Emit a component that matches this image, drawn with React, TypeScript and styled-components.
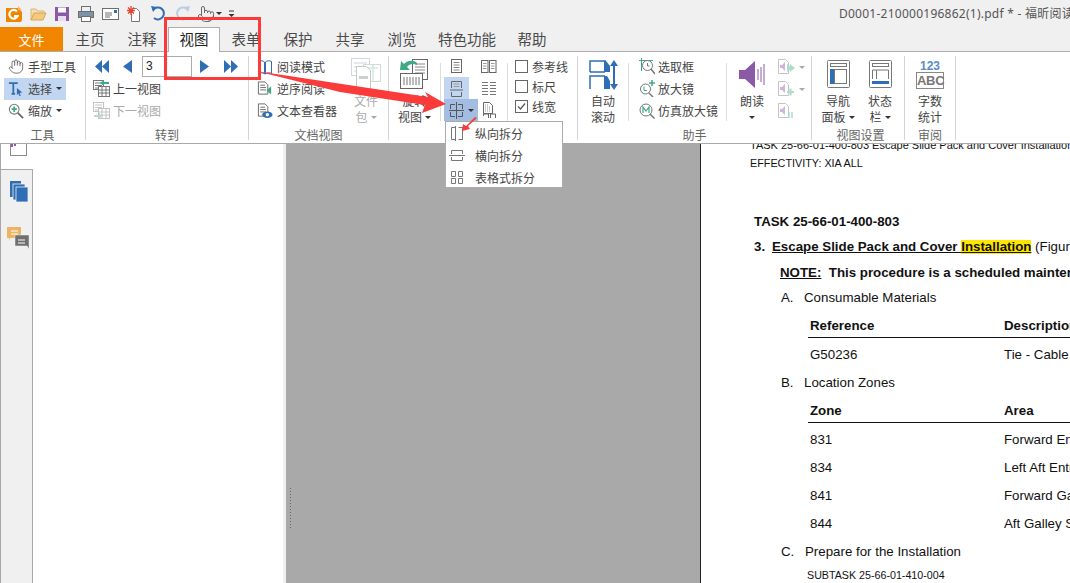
import React from "react";
import styled, { createGlobalStyle } from "styled-components";
import { Hand, Pointer } from "lucide-react";

const Global = createGlobalStyle`
  html, body { margin: 0; padding: 0; background: #fff; }
  #root { width: 1070px; height: 583px; overflow: hidden; }
`;

const CJK = `"Noto Sans CJK SC", "Liberation Sans", sans-serif`;
const BLUE = "#2f6db5";
const PURPLE = "#8a5aa6";
const GREEN = "#3fa884";
const GREY = "#6e6e6e";

const Shell = styled.div`
  position: relative;
  width: 1070px;
  height: 583px;
  overflow: hidden;
  display: flex;
  flex-direction: column;
  font-family: ${CJK};
  font-size: 12px;
  color: #444;
`;

const TitleBar = styled.div`
  height: 27px;
  background: #f0f0f0;
  display: flex;
  align-items: center;
  flex: none;
`;
const Quick = styled.div`
  display: flex;
  align-items: center;
  padding-left: 5px;
  gap: 6px;
`;
const QuickSlot = styled.span`
  width: 18px;
  height: 18px;
  display: flex;
  align-items: center;
  justify-content: center;
`;
const Title = styled.div`
  margin-left: auto;
  width: 231px;
  white-space: nowrap;
  overflow: hidden;
  font-family: "Noto Sans", "Noto Sans CJK SC", sans-serif;
  font-size: 12px;
  letter-spacing: 0.25px;
  line-height: 27px;
  color: #555;
  padding-bottom: 2px;
  box-sizing: border-box;
  height: 27px;
`;

const TabBar = styled.div`
  height: 24px;
  flex: none;
  background: #f0f0f0;
  display: flex;
  border-bottom: 1px solid #aeaeae;
`;
const FileTab = styled.div`
  width: 63px;
  height: 24px;
  margin-right: 1px;
  background: #f28500;
  color: #fff;
  font-size: 13px;
  line-height: 26px;
  text-align: center;
`;
const Tab = styled.div<{ $active?: boolean; $wide?: boolean }>`
  width: ${(p) => (p.$wide ? 78 : 52)}px;
  flex: none;
  text-align: center;
  height: ${(p) => (p.$active ? 25 : 24)}px;
  box-sizing: border-box;
  font-size: 14.5px;
  line-height: 23px;
  white-space: nowrap;
  background: ${(p) => (p.$active ? "#fff" : "transparent")};
  color: ${(p) => (p.$active ? "#222" : "#4a4a4a")};
  box-shadow: ${(p) => (p.$active ? "inset 1px 1px 0 #aeaeae, inset -1px 0 0 #aeaeae" : "none")};
  position: relative;
  z-index: 1;
`;

const Ribbon = styled.div`
  height: 91px;
  flex: none;
  background: #fff;
  display: flex;
  border-bottom: 1px solid #a8a8a8;
  box-sizing: content-box;
`;
const Group = styled.div<{ $w: number; $pad?: number }>`
  width: ${(p) => p.$w}px;
  flex: none;
  box-sizing: border-box;
  height: 84px;
  margin-top: 4px;
  border-right: 1px solid #d4d4d4;
  display: flex;
  flex-direction: column;
  padding-left: ${(p) => p.$pad ?? 0}px;
`;
const GroupBody = styled.div`
  height: 69px;
  flex: none;
  display: flex;
  align-items: flex-start;
`;
const GroupLabel = styled.div`
  margin-top: 2px;
  line-height: 15px;
  text-align: center;
  color: #666;
  font-size: 12px;
`;
const VRule = styled.div<{ $before?: number; $after?: number }>`
  width: 1px;
  height: 58px;
  flex: none;
  margin: 7px ${(p) => p.$after ?? 0}px 0 ${(p) => p.$before ?? 0}px;
  background: #dcdcdc;
`;
const Stack = styled.div<{ $w?: number; $left?: number }>`
  display: flex;
  flex-direction: column;
  flex: none;
  ${(p) => (p.$w ? `width:${p.$w}px;` : "")}
  margin-left: ${(p) => p.$left ?? 0}px;
`;
const Item = styled.div<{ $on?: boolean; $off?: boolean; $gap?: number }>`
  height: 22px;
  box-sizing: border-box;
  display: flex;
  align-items: center;
  gap: ${(p) => p.$gap ?? 4}px;
  padding: 0 4px 1px;
  white-space: nowrap;
  background: ${(p) => (p.$on ? "#c3d6f1" : "transparent")};
  color: ${(p) => (p.$off ? "#aaa" : "#444")};
`;
const IconBox = styled.span<{ $w?: number }>`
  width: ${(p) => p.$w ?? 16}px;
  height: 18px;
  flex: none;
  display: flex;
  align-items: center;
  justify-content: center;
`;
const Caret = styled.span<{ $c?: string; $ml?: number }>`
  width: 0;
  height: 0;
  flex: none;
  margin-left: ${(p) => p.$ml ?? 0}px;
  border-left: 3px solid transparent;
  border-right: 3px solid transparent;
  border-top: 3px solid ${(p) => p.$c ?? "#333"};
`;
const Big = styled.div<{ $w: number; $off?: boolean }>`
  width: ${(p) => p.$w}px;
  flex: none;
  display: flex;
  flex-direction: column;
  align-items: center;
  color: ${(p) => (p.$off ? "#aaa" : "#444")};
`;
const BigIcon = styled.div<{ $top?: number }>`
  height: 37px;
  box-sizing: border-box;
  padding-top: ${(p) => p.$top ?? 4}px;
  display: flex;
  align-items: flex-start;
  justify-content: center;
`;
const BigLine = styled.div`
  height: 16px;
  line-height: 16px;
  display: flex;
  align-items: center;
  gap: 3px;
  white-space: nowrap;
`;
const NavRow = styled.div`
  height: 22px;
  margin: -1px 0 1px;
  display: flex;
  align-items: center;
`;
const NavBtn = styled.span<{ $w: number }>`
  width: ${(p) => p.$w}px;
  flex: none;
  display: flex;
  justify-content: center;
`;
const PageBox = styled.div`
  width: 50px;
  height: 21px;
  margin-left: 2px;
  box-sizing: border-box;
  border: 1px solid #ababab;
  flex: none;
  font-family: "Liberation Sans", sans-serif;
  font-size: 12px;
  line-height: 19px;
  padding-left: 3px;
  color: #222;
  background: #fff;
`;
const SplitGrid = styled.div`
  display: grid;
  grid-template-columns: 34px 22px;
  grid-auto-rows: 22px;
  margin-top: -1px;
  flex: none;
`;
const SplitCell = styled.div`
  display: flex;
  align-items: center;
  justify-content: center;
`;
const LightCell = styled(SplitCell)`
  width: 25px;
  background: #c3d6f1;
`;
const DarkCell = styled(SplitCell)`
  gap: 4px;
  justify-content: flex-start;
  padding-left: 5px;
  background: #a3bde2;
`;
const PlainLeft = styled(SplitCell)`
  width: 25px;
`;
const CheckList = styled.div`
  display: flex;
  flex-direction: column;
  gap: 6px;
  margin-top: 3px;
  margin-left: 7px;
`;
const CheckRow = styled.div`
  display: flex;
  align-items: center;
  gap: 4px;
  height: 14px;
  white-space: nowrap;
`;
const CheckBox = styled.span`
  width: 13px;
  height: 13px;
  box-sizing: border-box;
  border: 1px solid #666;
  display: flex;
  align-items: center;
  justify-content: center;
  flex: none;
`;
const MiniRow = styled.div`
  height: 22px;
  display: flex;
  align-items: center;
  gap: 4px;
`;

const Main = styled.div`
  flex: 1;
  display: flex;
  min-height: 0;
`;
const SideColumn = styled.div`
  width: 33px;
  flex: none;
  display: flex;
  flex-direction: column;
`;
const SideTop = styled.div`
  height: 25px;
  flex: none;
  box-sizing: border-box;
  border-left: 1px solid #a8a8a8;
  padding-left: 9px;
  background: #fff;
`;
const ActiveTab = styled.div`
  width: 17px;
  height: 12px;
  box-sizing: border-box;
  border: 1px solid #8a8a8a;
  border-top: none;
  display: flex;
  align-items: flex-start;
`;
const Rail = styled.div`
  flex: 1;
  box-sizing: border-box;
  background: #f0f0f0;
  border-top: 1px solid #a8a8a8;
  border-right: 1px solid #a8a8a8;
  border-left: 1px solid #a8a8a8;
  display: flex;
  flex-direction: column;
  align-items: center;
  padding: 11px 0 0 4px;
  gap: 25px;
`;
const SidePanel = styled.div`
  width: 250px;
  flex: none;
  background: #fff;
`;
const Splitter = styled.div`
  width: 3px;
  flex: none;
  background: #f0f0f0;
`;
const Canvas = styled.div`
  flex: 1;
  background: #a9a9a9;
  display: flex;
  min-width: 0;
`;
const GripZone = styled.div`
  width: 414px;
  flex: none;
  display: flex;
  align-items: flex-end;
  padding: 0 0 53px 3px;
  box-sizing: border-box;
`;
const Grip = styled.div`
  width: 4px;
  height: 43px;
  background-image: radial-gradient(#666 0.8px, transparent 0.9px);
  background-size: 3px 3px;
`;
const PdfPage = styled.div`
  flex: 1;
  min-width: 0;
  background: #fff;
  border-left: 1px solid #222;
  overflow: hidden;
  font-family: "Liberation Sans", Arial, sans-serif;
  color: #111;
`;
const PdfLine = styled.div<{ $top: number; $left: number; $size?: number; $bold?: boolean }>`
  height: 14px;
  line-height: 14px;
  margin-top: ${(p) => p.$top}px;
  padding-left: ${(p) => p.$left}px;
  font-size: ${(p) => p.$size ?? 13.3}px;
  font-weight: ${(p) => (p.$bold ? 700 : 400)};
  white-space: nowrap;
  display: flex;
`;
const Num = styled.span<{ $w: number }>`
  width: ${(p) => p.$w}px;
  flex: none;
`;
const Under = styled.span`
  text-decoration: underline;
  white-space: pre;
`;
const Mark = styled.span`
  background: #ffe600;
  text-decoration: underline;
`;
const Plain = styled.span`
  white-space: pre;
  font-weight: 400;
`;
const Pre = styled.span`
  white-space: pre;
`;
const TableRule = styled.div`
  height: 1px;
  background: #111;
  margin: 4px 0 0 107px;
`;

const Menu = styled.div`
  position: absolute;
  left: 445px;
  top: 121px;
  width: 118px;
  height: 67px;
  box-sizing: border-box;
  background: #fff;
  border: 1px solid #ababab;
  z-index: 5;
`;
const MenuItem = styled.div`
  height: 22px;
  display: flex;
  align-items: center;
  gap: 10px;
  padding-left: 3px;
  white-space: nowrap;
`;
const MenuIcon = styled.span`
  width: 16px;
  flex: none;
  display: flex;
  justify-content: center;
`;
const Overlay = styled.svg`
  position: absolute;
  left: 0;
  top: 0;
  z-index: 6;
  pointer-events: none;
`;

/* ---------- icons ---------- */
const S = ({ w, h, children }: { w: number; h: number; children: React.ReactNode }) => (
  <svg width={w} height={h} viewBox={`0 0 ${w} ${h}`} fill="none">{children}</svg>
);
const Logo = () => (
  <S w={18} h={18}>
    <path d="M1 3h12l4 4v8a2 2 0 0 1-2 2H1z" fill="#f28500" />
    <path d="M13 1l4 4h-4z" fill="#f7b56c" />
    <path d="M12 6.500A4.300 4.300 0 1 0 12.600 11H9" stroke="#fff" strokeWidth="2.200" />
  </S>
);
const Folder = () => (
  <S w={18} h={18}>
    <path d="M2 4h5l2 2h6v3H5L2 15z" fill="#f5dfae" stroke="#d9b877" />
    <path d="M2 15l3-7h12l-3 7z" fill="#f3c97f" stroke="#d9a654" />
  </S>
);
const Save = () => (
  <S w={16} h={16}>
    <rect x="1" y="1" width="14" height="14" fill={PURPLE} />
    <rect x="4" y="1.500" width="8" height="5" fill="#fff" />
    <rect x="4" y="10" width="8" height="5" fill="#e9def0" />
  </S>
);
const Printer = () => (
  <S w={18} h={18}>
    <rect x="4.500" y="1.500" width="9" height="5" stroke={GREY} />
    <rect x="1.500" y="6.500" width="15" height="6" fill="#8b9098" stroke={GREY} />
    <rect x="4.500" y="11.500" width="9" height="5" fill="#fff" stroke={GREY} />
    <rect x="4" y="8" width="10" height="1.500" fill="#5b9bd5" />
  </S>
);
const Mail = () => (
  <S w={17} h={14}>
    <rect x="0.500" y="1.500" width="16" height="11" stroke={GREY} fill="#fff" />
    <path d="M3 6h7M3 8h7M3 10h5" stroke={GREY} />
    <rect x="12" y="3" width="3" height="3" fill={BLUE} />
  </S>
);
const StarDoc = () => (
  <S w={16} h={18}>
    <path d="M6.500 3.500h4l3 3v10h-8v-8" stroke="#777" fill="#fff" />
    <path d="M5 1v9M1 5.500h8M2 2.500l6 6M8 2.500l-6 6" stroke="#e8452f" strokeWidth="1.300" />
  </S>
);
const Undo = ({ c }: { c: string }) => (
  <S w={17} h={17}>
    <path d="M3 5a6 6 0 1 1 1 8" stroke={c} strokeWidth="2" />
    <path d="M1 1l6 1-4 5z" fill={c} />
  </S>
);
const Redo = ({ c }: { c: string }) => (
  <S w={17} h={17}>
    <path d="M14 5a6 6 0 1 0-1 8" stroke={c} strokeWidth="2" />
    <path d="M16 1l-6 1 4 5z" fill={c} />
  </S>
);
const Customize = () => (
  <S w={7} h={8}>
    <path d="M1 1h5" stroke="#333" />
    <path d="M0.500 4h6L3.500 7z" fill="#333" />
  </S>
);
const SelectT = () => (
  <S w={18} h={18}>
    <path d="M1 2.500h10M6 2.500v12M4 14.500h4" stroke={BLUE} strokeWidth="2" />
    <path d="M10 8l6 5-3 .5 1.500 3-1.500.5-1.500-3-1.500 2z" fill={BLUE} />
  </S>
);
const ZoomIcon = () => (
  <S w={18} h={18}>
    <circle cx="7" cy="7" r="5.500" fill="#fff" stroke="#777" strokeWidth="1.200" />
    <path d="M4 7h6M7 4v6" stroke={GREEN} strokeWidth="2" />
    <path d="M11 11l6 6" stroke="#666" strokeWidth="2" />
  </S>
);
const DoubleLeft = () => (
  <S w={14} h={13}>
    <path d="M7 0v13L0 6.500zM14 0v13L7 6.500z" fill={BLUE} />
  </S>
);
const DoubleRight = () => (
  <S w={14} h={13}>
    <path d="M0 0v13l7-6.500zM7 0v13l7-6.500z" fill={BLUE} />
  </S>
);
const One = ({ left }: { left?: boolean }) => (
  <S w={9} h={13}>
    <path d={left ? "M9 0v13L0 6.500z" : "M0 0v13l9-6.500z"} fill={BLUE} />
  </S>
);
const ViewHist = ({ off, back }: { off?: boolean; back?: boolean }) => {
  const line = off ? "#c4c4c4" : "#777";
  const arrow = off ? "#b6dccd" : GREEN;
  return (
    <S w={17} h={17}>
      <rect x="0.500" y="0.500" width="10" height="9" fill="#fff" stroke={line} />
      <path d="M2 3h7M2 5.500h7M2 8h5" stroke={line} />
      <rect x="5.500" y="6.500" width="11" height="10" fill="#fff" stroke={line} />
      <path d="M5.500 10h11M5.500 13h11M9 6.500v10M13 6.500v10" stroke={line} />
      {back ? <path d="M7 3l4-3v2h5v2h-5v2z" fill={arrow} /> : <path d="M1 13h5v-2l3 3-3 3v-2H1z" fill={arrow} />}
    </S>
  );
};
const BookIcon = () => (
  <S w={16} h={16}>
    <path d="M1.500 2.500c2-1 4.500-1 6 .5v12c-1.500-1.500-4-1.500-6-.5z" fill="#fff" stroke={BLUE} />
    <path d="M14.500 2.500c-2-1-4.500-1-6 .5v12c1.500-1.500 4-1.500 6-.5z" fill="#fff" stroke={BLUE} />
  </S>
);
const DocIcon = ({ mark }: { mark: "back" | "eye" }) => (
  <S w={17} h={17}>
    <path d="M1.500 1.500h7l3 3v10h-10z" fill="#fff" stroke="#666" />
    <path d="M3.500 5h5M3.500 7.500h6M3.500 10h6" stroke="#666" />
    {mark === "back" ? (
      <path d="M15 6v9l-5-4.500z" fill={GREEN} />
    ) : (
      <>
        <ellipse cx="11" cy="13" rx="5.500" ry="3.500" fill={BLUE} />
        <circle cx="11" cy="13" r="1.800" fill="#fff" />
      </>
    )}
  </S>
);
const PackIcon = () => (
  <S w={30} h={33}>
    <rect x="0.500" y="0.500" width="18" height="17" fill="#fff" stroke="#cfd8e4" />
    <path d="M3 5h13M3 9h13M3 13h8" stroke="#c7d7e6" />
    <rect x="12.500" y="6.500" width="17" height="17" fill="#fff" stroke="#cfdcd5" />
    <path d="M16 10h11M22 7v16" stroke="#bfe0d2" />
    <path d="M5.500 8.500h10l4 4v19h-14z" fill="#fff" stroke="#c8c8c8" />
    <rect x="8" y="18" width="9" height="3" fill="#cfcfcf" />
  </S>
);
const RotateIcon = () => (
  <S w={32} h={32}>
    <rect x="13.500" y="1.500" width="15" height="20" fill="#fff" stroke="#666" />
    <path d="M16 6h10M16 9h10M16 12h10M16 15h10" stroke="#888" />
    <path d="M1 12L2 3l3 3c4-4 10-4 13-1v2c-4-2-8-1-10 2l3 3z" fill={GREEN} />
    <rect x="1.500" y="15.500" width="22" height="15" fill="#fff" stroke="#666" />
    <path d="M5 19v8M8 19v8M11 19v8M14 19v8M17 19v8M20 19v8" stroke="#777" />
  </S>
);
const Page1 = () => (
  <S w={13} h={16}>
    <rect x="1.500" y="1.500" width="10" height="13" stroke="#666" />
    <path d="M3.500 4.500h6M3.500 7h6M3.500 9.500h6M3.500 12h6" stroke="#888" />
  </S>
);
const Page2 = () => (
  <S w={16} h={15}>
    <rect x="0.500" y="1.500" width="6.500" height="12" stroke="#666" />
    <rect x="8.500" y="1.500" width="6.500" height="12" stroke="#666" />
    <path d="M2 4.500h3.500M2 7h3.500M2 9.500h3.500M10 4.500h3.500M10 7h3.500M10 9.500h3.500" stroke="#999" />
  </S>
);
const HSplit = () => (
  <S w={13} h={17}>
    <path d="M1.500 8V1.500h10V8M1.500 12v4.500h10V12M0 10h13" stroke="#666" />
    <path d="M3.500 4h6M3.500 6.500h6" stroke="#999" />
  </S>
);
const TwoCont = () => (
  <S w={16} h={17}>
    <path d="M1 2.500h6M1 5.500h6M1 8.500h6M1 11.500h6M1 14.500h6M9 2.500h6M9 5.500h6M9 8.500h6M9 11.500h6M9 14.500h6" stroke="#777" />
  </S>
);
const GridSplit = () => (
  <S w={15} h={17}>
    <path d="M1.500 7V2.500h4.500M13.500 7V2.500H9M1.500 10v4.500h4.500M13.500 10v4.500H9M0 8.500h15M7.500 0v17" stroke="#555" />
  </S>
);
const ScanPage = () => (
  <S w={15} h={18}>
    <path d="M1.500 1.500h6l3 3v8h-9z" fill="#fff" stroke="#666" />
    <path d="M3 4h4M3 6h6M3 8h6M3 10h6" stroke="#999" strokeDasharray="1 1" />
    <path d="M1.500 15v-2h5v4M8.500 17v-4h5v4" stroke="#666" />
  </S>
);
const VSplitMenu = () => (
  <S w={14} h={15}>
    <path d="M5.500 1.500H1.500v12h4M5.500 0v15M8.500 1.500h4.500M8.500 13.500h4.500M12.500 1.500v12" stroke="#777" />
  </S>
);
const HSplitMenu = () => (
  <S w={16} h={13}>
    <path d="M2.500 5V1.500h11V5M0 6.500h16M2.500 8v3.500h11V8" stroke="#777" />
  </S>
);
const GridMenu = () => (
  <S w={14} h={15}>
    <path d="M1.500 1.500h4v5h-4zM8.500 1.500h4v5h-4zM1.500 8.500h4v5h-4zM8.500 8.500h4v5h-4z" stroke="#777" />
  </S>
);
const Tick = () => (
  <S w={11} h={11}>
    <path d="M2 5.500l2.500 2.500L9 2.500" stroke="#555" strokeWidth="1.200" />
  </S>
);
const AutoScroll = () => (
  <S w={29} h={30}>
    <path d="M1 12V1h16M1 12h15" stroke={BLUE} strokeWidth="1.500" />
    <path d="M15 1h2l4 5v6h-6z" fill={BLUE} />
    <path d="M1 29V16h15" stroke={BLUE} strokeWidth="1.500" />
    <path d="M15 16h3l3 5v8h-6z" fill={BLUE} />
    <path d="M25 3v25" stroke={BLUE} strokeWidth="2" />
    <path d="M25 0l4 6h-8zM25 30l4-6h-8z" fill={BLUE} />
  </S>
);
const Marquee = () => (
  <S w={16} h={17}>
    <path d="M0 2.500h14M2.500 0v13" stroke={GREEN} />
    <circle cx="8.500" cy="7.500" r="5" fill="#fff" stroke="#777" />
    <path d="M8.500 5v3h2" stroke="#777" />
    <path d="M12 11l4 5" stroke="#777" strokeWidth="1.500" />
  </S>
);
const Lens = () => (
  <S w={16} h={17}>
    <circle cx="6.500" cy="9" r="5" fill="#fff" stroke="#777" />
    <path d="M5 6.500v4h3" stroke={GREEN} />
    <path d="M10 13l4 4" stroke="#777" strokeWidth="1.500" />
    <path d="M10 3h6M13 0v6" stroke={GREEN} strokeWidth="1.500" />
  </S>
);
const LensM = () => (
  <S w={16} h={17}>
    <circle cx="7" cy="8" r="6" fill="#fff" stroke="#777" />
    <path d="M4 11V5l3 4 3-4v6" stroke={GREEN} strokeWidth="1.200" />
    <path d="M11 12l4.500 4.500" stroke="#777" strokeWidth="1.500" />
  </S>
);
const Speaker = () => (
  <S w={27} h={29}>
    <path d="M0 10h6l10-9v27l-10-9H0z" fill={PURPLE} />
    <path d="M19 9v11M22 7v15M25 4v21" stroke={PURPLE} />
  </S>
);
const SpeakerDoc = ({ mark }: { mark: "play" | "plus" | "pause" }) => (
  <S w={18} h={18}>
    <path d="M1.500 1.500h7l3 3v11h-10z" fill="#fff" stroke="#c4c4c4" />
    <path d="M3 7h2l3-3v9l-3-3H3z" fill="#cdb5dc" />
    {mark === "play" && <path d="M10 6l5 4-5 4zM13 6l5 4-5 4z" fill="#aedccb" />}
    {mark === "plus" && <path d="M10 12h7M13.500 8.500v7" stroke="#aedccb" strokeWidth="2" />}
    {mark === "pause" && <path d="M12 10v6M15 10v6" stroke="#aedccb" strokeWidth="1.500" />}
  </S>
);
const NavPanel = () => (
  <S w={23} h={28}>
    <rect x="0.500" y="0.500" width="22" height="27" rx="1" fill="#fff" stroke="#777" />
    <rect x="3.500" y="3.500" width="16" height="3" stroke="#777" />
    <rect x="3" y="9" width="4" height="15" fill={BLUE} />
    <rect x="7.500" y="9.500" width="12" height="14" stroke="#777" />
  </S>
);
const StatusBar = () => (
  <S w={23} h={28}>
    <rect x="0.500" y="0.500" width="22" height="27" rx="1" fill="#fff" stroke="#777" />
    <rect x="3.500" y="3.500" width="16" height="3" stroke="#777" />
    <path d="M3.500 19v-9h16v9M7.500 10v9" stroke="#777" />
    <rect x="3" y="21" width="17" height="3" fill={BLUE} />
  </S>
);
const TabGlyph = () => (
  <S w={6} h={3}>
    <path d="M0 0h2v3H0zM3 0h2v2H3z" fill={PURPLE} />
  </S>
);
const CountText = styled.div`
  display: flex;
  flex-direction: column;
  align-items: center;
  font-family: "Liberation Sans", sans-serif;
  font-weight: 700;
  line-height: 12px;
`;
const Count123 = styled.span`
  color: #5b8cc4;
  font-size: 12px;
  line-height: 12px;
`;
const CountAbc = styled.span`
  color: #777;
  font-size: 13px;
  line-height: 15px;
  width: 28px;
  box-sizing: border-box;
  text-align: center;
  border: 1px solid #888;
  letter-spacing: -0.3px;
`;
const Pages = () => (
  <S w={18} h={21}>
    <rect x="0" y="0" width="11" height="16" fill={BLUE} />
    <rect x="3" y="3" width="12" height="16" fill={BLUE} stroke="#f0f0f0" strokeWidth="0.800" />
    <rect x="6" y="6" width="12" height="15" fill={BLUE} stroke="#f0f0f0" strokeWidth="0.800" />
  </S>
);
const Comments = () => (
  <S w={23} h={24}>
    <path d="M0 0h14v11H3v3l-1-3H0z" fill="#ecb463" />
    <path d="M4 4h7M4 7h7" stroke="#fff" />
    <path d="M8 8h14v14l-2-3H8z" fill="#6f6f6f" stroke="#f0f0f0" strokeWidth="0.500" />
    <path d="M11 13h7M11 16h7" stroke="#fff" />
  </S>
);

const tabs = ["主页", "注释", "视图", "表单", "保护", "共享", "浏览", "特色功能", "帮助"];

export default function App() {
  return (
    <Shell>
      <Global />
      <TitleBar>
        <Quick>
          <QuickSlot><Logo /></QuickSlot>
          <QuickSlot><Folder /></QuickSlot>
          <QuickSlot><Save /></QuickSlot>
          <QuickSlot><Printer /></QuickSlot>
          <QuickSlot><Mail /></QuickSlot>
          <QuickSlot><StarDoc /></QuickSlot>
          <QuickSlot><Undo c={BLUE} /></QuickSlot>
          <QuickSlot><Redo c="#b9cde4" /></QuickSlot>
          <QuickSlot><Pointer size={18} strokeWidth={1.3} color="#666" /></QuickSlot>
          <Caret $ml={-5} />
          <Customize />
        </Quick>
        <Title>D0001-210000196862(1).pdf * - 福昕阅读器</Title>
      </TitleBar>
      <TabBar>
        <FileTab>文件</FileTab>
        {tabs.map((t) => (
          <Tab key={t} $active={t === "视图"} $wide={t.length > 2}>{t}</Tab>
        ))}
      </TabBar>
      <Ribbon>
        <Group $w={86}>
          <GroupBody>
            <Stack $left={4} $w={62}>
              <Item><IconBox><Hand size={17} strokeWidth={1.2} color="#555" /></IconBox>手型工具</Item>
              <Item $on><IconBox><SelectT /></IconBox>选择<Caret /></Item>
              <Item><IconBox><ZoomIcon /></IconBox>缩放<Caret /></Item>
            </Stack>
          </GroupBody>
          <GroupLabel>工具</GroupLabel>
        </Group>
        <Group $w={163}>
          <GroupBody>
            <Stack $left={3}>
              <NavRow>
                <NavBtn $w={26}><DoubleLeft /></NavBtn>
                <NavBtn $w={25}><One left /></NavBtn>
                <PageBox>3</PageBox>
                <NavBtn $w={24}><One /></NavBtn>
                <NavBtn $w={29}><DoubleRight /></NavBtn>
              </NavRow>
              <Item $gap={3}><IconBox $w={17}><ViewHist back /></IconBox>上一视图</Item>
              <Item $off $gap={3}><IconBox $w={17}><ViewHist off /></IconBox>下一视图</Item>
            </Stack>
          </GroupBody>
          <GroupLabel>转到</GroupLabel>
        </Group>
        <Group $w={140}>
          <GroupBody>
            <Stack $left={4} $w={90}>
              <Item><IconBox><BookIcon /></IconBox>阅读模式</Item>
              <Item><IconBox><DocIcon mark="back" /></IconBox>逆序阅读</Item>
              <Item><IconBox><DocIcon mark="eye" /></IconBox>文本查看器</Item>
            </Stack>
            <Big $w={46} $off>
              <BigIcon $top={2}><PackIcon /></BigIcon>
              <BigLine>文件</BigLine>
              <BigLine>包<Caret $c="#aaa" /></BigLine>
            </Big>
          </GroupBody>
          <GroupLabel>文档视图</GroupLabel>
        </Group>
        <Group $w={189}>
          <GroupBody>
            <Big $w={51}>
              <BigIcon $top={2}><RotateIcon /></BigIcon>
              <BigLine>旋转</BigLine>
              <BigLine>视图<Caret /></BigLine>
            </Big>
            <VRule $after={3} />
            <SplitGrid>
              <PlainLeft><Page1 /></PlainLeft>
              <SplitCell><Page2 /></SplitCell>
              <LightCell><HSplit /></LightCell>
              <SplitCell><TwoCont /></SplitCell>
              <DarkCell><GridSplit /><Caret /></DarkCell>
              <SplitCell><ScanPage /></SplitCell>
            </SplitGrid>
            <VRule $before={7} />
            <CheckList>
              <CheckRow><CheckBox />参考线</CheckRow>
              <CheckRow><CheckBox />标尺</CheckRow>
              <CheckRow><CheckBox><Tick /></CheckBox>线宽</CheckRow>
            </CheckList>
          </GroupBody>
        </Group>
        <Group $w={234}>
          <GroupBody>
            <Big $w={50}>
              <BigIcon><AutoScroll /></BigIcon>
              <BigLine>自动</BigLine>
              <BigLine>滚动</BigLine>
            </Big>
            <VRule />
            <Stack $left={4} $w={93}>
              <Item $gap={1}><IconBox $w={20}><Marquee /></IconBox>选取框</Item>
              <Item $gap={1}><IconBox $w={20}><Lens /></IconBox>放大镜</Item>
              <Item $gap={1}><IconBox $w={20}><LensM /></IconBox>仿真放大镜</Item>
            </Stack>
            <VRule />
            <Big $w={50}>
              <BigIcon><Speaker /></BigIcon>
              <BigLine>朗读</BigLine>
              <BigLine><Caret /></BigLine>
            </Big>
            <Stack>
              <MiniRow><SpeakerDoc mark="play" /><Caret $c="#aaa" /></MiniRow>
              <MiniRow><SpeakerDoc mark="plus" /><Caret $c="#aaa" /></MiniRow>
              <MiniRow><SpeakerDoc mark="pause" /></MiniRow>
            </Stack>
          </GroupBody>
          <GroupLabel>助手</GroupLabel>
        </Group>
        <Group $w={93} $pad={5}>
          <GroupBody>
            <Big $w={42}>
              <BigIcon><NavPanel /></BigIcon>
              <BigLine>导航</BigLine>
              <BigLine>面板<Caret /></BigLine>
            </Big>
            <Big $w={42}>
              <BigIcon><StatusBar /></BigIcon>
              <BigLine>状态</BigLine>
              <BigLine>栏<Caret /></BigLine>
            </Big>
          </GroupBody>
          <GroupLabel>视图设置</GroupLabel>
        </Group>
        <Group $w={51}>
          <GroupBody>
            <Big $w={50}>
              <BigIcon>
                <CountText>
                  <Count123>123</Count123>
                  <CountAbc>ABC</CountAbc>
                </CountText>
              </BigIcon>
              <BigLine>字数</BigLine>
              <BigLine>统计</BigLine>
            </Big>
          </GroupBody>
          <GroupLabel>审阅</GroupLabel>
        </Group>
      </Ribbon>
      <Main>
        <SideColumn>
          <SideTop><ActiveTab><TabGlyph /></ActiveTab></SideTop>
          <Rail>
            <Pages />
            <Comments />
          </Rail>
        </SideColumn>
        <SidePanel />
        <Splitter />
        <Canvas>
          <GripZone><Grip /></GripZone>
          <PdfPage>
            <PdfLine $top={-6} $left={49} $size={11}>TASK 25-66-01-400-803   Escape Slide Pack and Cover Installation</PdfLine>
            <PdfLine $top={4} $left={49} $size={10.8}>EFFECTIVITY: XIA ALL</PdfLine>
            <PdfLine $top={45} $left={53} $bold>TASK 25-66-01-400-803</PdfLine>
            <PdfLine $top={11} $left={53} $bold>
              <Num $w={18}>3.</Num>
              <Under>Escape Slide Pack and Cover </Under>
              <Mark>Installation</Mark>
              <Plain> (Figure 401)</Plain>
            </PdfLine>
            <PdfLine $top={12} $left={79} $bold>
              <Under>NOTE:</Under>
              <Pre>  This procedure is a scheduled maintenance task.</Pre>
            </PdfLine>
            <PdfLine $top={11} $left={80}><Num $w={23}>A.</Num>Consumable Materials</PdfLine>
            <PdfLine $top={14} $left={109} $bold><Num $w={194}>Reference</Num>Description</PdfLine>
            <TableRule />
            <PdfLine $top={10} $left={109}><Num $w={194}>G50236</Num>Tie - Cable</PdfLine>
            <PdfLine $top={14} $left={80}><Num $w={23}>B.</Num>Location Zones</PdfLine>
            <PdfLine $top={14} $left={109} $bold><Num $w={194}>Zone</Num>Area</PdfLine>
            <TableRule />
            <PdfLine $top={10} $left={109}><Num $w={194}>831</Num>Forward Entry Door</PdfLine>
            <PdfLine $top={14} $left={109}><Num $w={194}>834</Num>Left Aft Entry Door</PdfLine>
            <PdfLine $top={14} $left={109}><Num $w={194}>841</Num>Forward Galley Service</PdfLine>
            <PdfLine $top={14} $left={109}><Num $w={194}>844</Num>Aft Galley Service</PdfLine>
            <PdfLine $top={14} $left={80}><Num $w={24}>C.</Num>Prepare for the Installation</PdfLine>
            <PdfLine $top={9} $left={106} $size={10.7}>SUBTASK 25-66-01-410-004</PdfLine>
          </PdfPage>
        </Canvas>
      </Main>
      <Menu>
        <MenuItem><MenuIcon><VSplitMenu /></MenuIcon>纵向拆分</MenuItem>
        <MenuItem><MenuIcon><HSplitMenu /></MenuIcon>横向拆分</MenuItem>
        <MenuItem><MenuIcon><GridMenu /></MenuIcon>表格式拆分</MenuItem>
      </Menu>
      <Overlay width={1070} height={583} viewBox="0 0 1070 583">
        <rect x="165.500" y="18.500" width="94" height="60" stroke="#fb3a3a" strokeWidth="3" fill="none" />
        <path d="M256 71L428 97 425 92 446 104 422 113 425 105 340 92z" fill="#fb3a3a" />
        <path d="M477 118L468 126 470 129 462 131 463 124 466 126 475 117z" fill="#fb3a3a" />
      </Overlay>
    </Shell>
  );
}
